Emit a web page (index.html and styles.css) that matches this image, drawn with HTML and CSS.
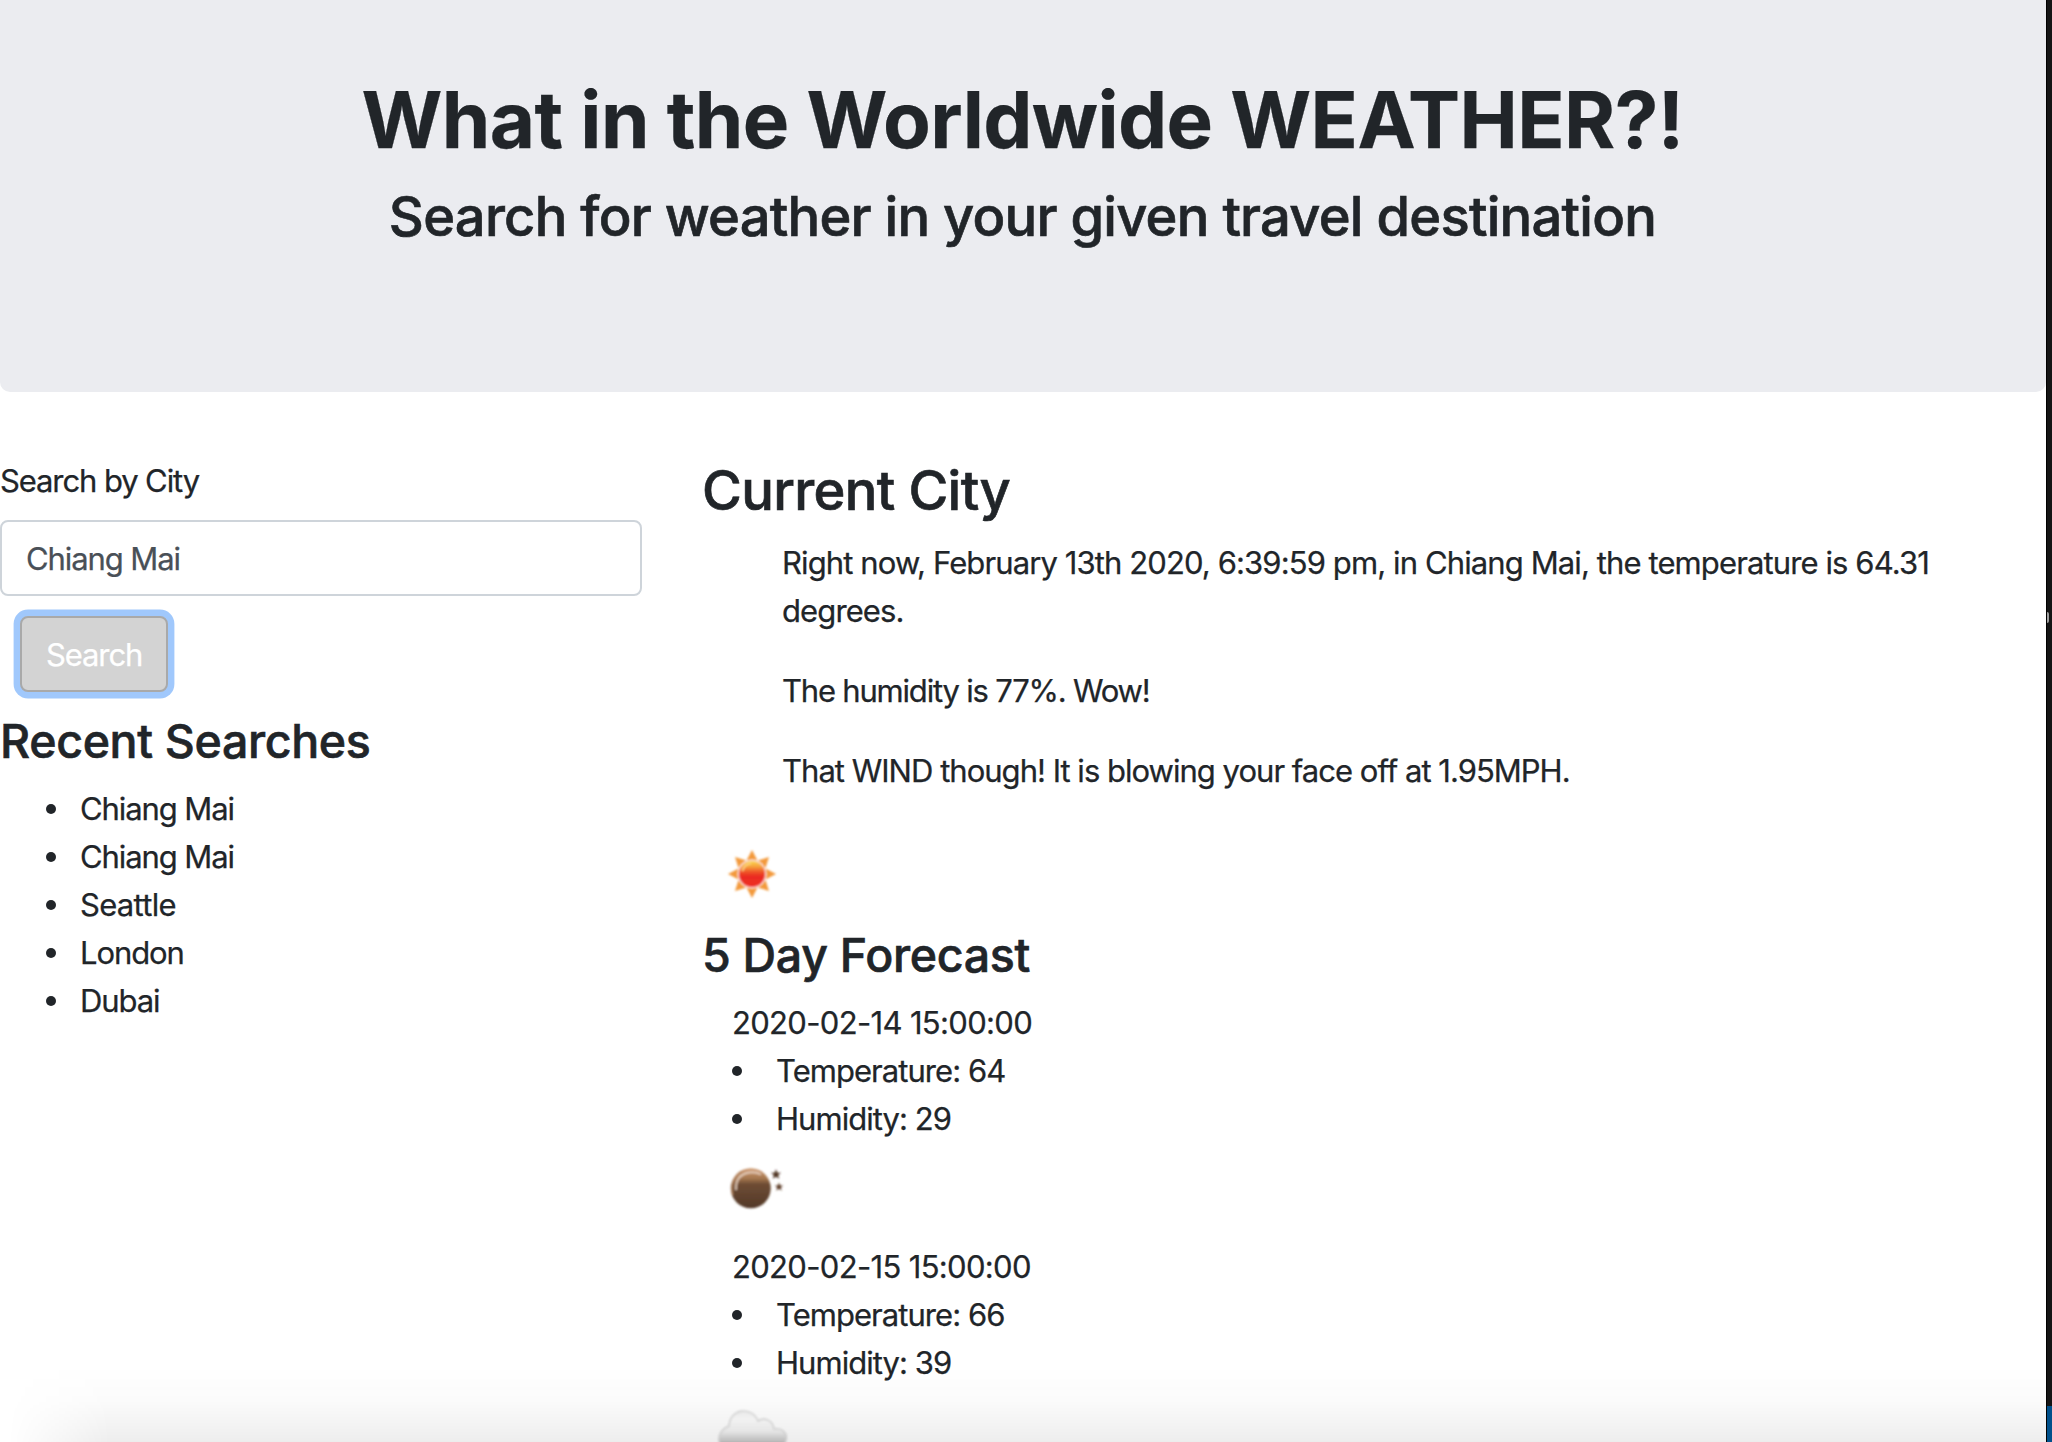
FILE: index.html
```html
<!DOCTYPE html>
<html lang="en">
<head>
<meta charset="utf-8">
<title>What in the Worldwide WEATHER?!</title>
<link rel="stylesheet" href="styles.css">
</head>
<body>
<div class="screen">
  <main class="page">
    <header class="jumbotron">
      <h1 class="title">What in the Worldwide WEATHER?!</h1>
      <h3 class="subtitle">Search for weather in your given travel destination</h3>
    </header>
    <div class="columns">
      <section class="sidebar">
        <label class="label" for="city">Search by City</label>
        <input class="input" id="city" type="text" value="Chiang Mai">
        <button class="button" type="button">Search</button>
        <h4 class="heading">Recent Searches</h4>
        <ul class="recent">
          <li class="bullet">Chiang Mai</li>
          <li class="bullet">Chiang Mai</li>
          <li class="bullet bullet-loose">Seattle</li>
          <li class="bullet">London</li>
          <li class="bullet">Dubai</li>
        </ul>
      </section>
      <section class="content">
        <h3 class="city">Current City</h3>
        <div class="current">
          <p class="now">Right now, February 13th 2020, 6:39:59 pm, in Chiang Mai, the temperature is 64.31 degrees.</p>
          <p class="humidity">The humidity is 77%. Wow!</p>
          <p class="wind">That WIND though! It is blowing your face off at 1.95MPH.</p>
        </div>
        <svg class="icon" viewBox="0 0 100 100" aria-hidden="true">
          <defs>
            <linearGradient id="sun" x1="0" y1="0" x2="0" y2="1">
              <stop offset="0" stop-color="#fbd84e"/>
              <stop offset=".22" stop-color="#f6a03c"/>
              <stop offset=".45" stop-color="#ee4a26"/>
              <stop offset=".6" stop-color="#ea2c20"/>
              <stop offset="1" stop-color="#ee3026"/>
            </linearGradient>
            <filter id="soft"><feGaussianBlur stdDeviation=".85"/></filter>
            <path id="ray" d="M50 26 55.500 36.500Q50 34.500 44.500 36.500Z"/>
          </defs>
          <g filter="url(#soft)">
            <g fill="#f3993a">
              <use href="#ray"/>
              <use href="#ray" transform="rotate(45 50 50)"/>
              <use href="#ray" transform="rotate(90 50 50)"/>
              <use href="#ray" transform="rotate(135 50 50)"/>
              <use href="#ray" transform="rotate(180 50 50)"/>
              <use href="#ray" transform="rotate(225 50 50)"/>
              <use href="#ray" transform="rotate(270 50 50)"/>
              <use href="#ray" transform="rotate(315 50 50)"/>
            </g>
            <circle cx="50" cy="50" r="13.800" fill="#f9c9c4"/>
            <circle cx="50" cy="50" r="13" fill="url(#sun)"/>
            <path d="M40.500 47Q42 40.500 49 39.500" fill="none" stroke="#fde79a" stroke-width="1.200"/>
          </g>
        </svg>
        <h4 class="heading forecast">5 Day Forecast</h4>
        <div class="day">
          <div class="date">2020-02-14 15:00:00</div>
          <ul class="facts">
            <li class="bullet">Temperature: 64</li>
            <li class="bullet">Humidity: 29</li>
          </ul>
          <svg class="icon" viewBox="0 0 100 100" aria-hidden="true">
            <defs>
              <linearGradient id="moon" x1="0" y1="0" x2="0" y2="1">
                <stop offset="0" stop-color="#d09a70"/>
                <stop offset=".25" stop-color="#a67850"/>
                <stop offset=".4" stop-color="#6e4c34"/>
                <stop offset="1" stop-color="#523828"/>
              </linearGradient>
              <path id="star" d="M0-5 1.400-1.600 5-1.500 2.200.8 3.200 4.500 0 2.400-3.200 4.500-2.200.8-5-1.500-1.400-1.600Z"/>
            </defs>
            <g filter="url(#soft)">
              <circle cx="48.800" cy="45.300" r="20" fill="url(#moon)"/>
              <path d="M34 47Q33 32 47 29.500 54 28.500 59 31.500" fill="none" stroke="#e3cbb8" stroke-width="1.800"/>
              <path d="M30.500 52Q28 36 39 29" fill="none" stroke="#b4845e" stroke-width="1.500"/>
              <use href="#star" x="74" y="31.300" fill="#4f3424"/>
              <use href="#star" transform="translate(77 43.800) scale(.85)" fill="#5e3e2a"/>
            </g>
          </svg>
        </div>
        <div class="day">
          <div class="date">2020-02-15 15:00:00</div>
          <ul class="facts">
            <li class="bullet">Temperature: 66</li>
            <li class="bullet">Humidity: 39</li>
          </ul>
          <svg class="icon" viewBox="0 0 100 100" aria-hidden="true">
            <defs>
              <linearGradient id="cloud" x1="0" y1="22" x2="0" y2="56" gradientUnits="userSpaceOnUse">
                <stop offset="0" stop-color="#eeeeee"/>
                <stop offset=".3" stop-color="#fcfcfc"/>
                <stop offset=".65" stop-color="#f4f4f4"/>
                <stop offset="1" stop-color="#c2c2c2"/>
              </linearGradient>
            </defs>
            <path filter="url(#soft)" d="M20 61C14 53 17 43 27 39 28 21 50 19 56 34 62 30 71 33 72 42 79 41 87 45 83.500 55L82 61Z" fill="url(#cloud)" stroke="#dcdcdc" stroke-width="1.600"/>
          </svg>
        </div>
      </section>
    </div>
    <div class="shade"></div>
  </main>
  <aside class="edge">
    <span class="grip"></span>
    <span class="status"></span>
  </aside>
</div>
</body>
</html>
```
FILE: styles.css
```css
* { box-sizing: border-box; }

body {
  margin: 0;
  overflow: hidden;
  font-family: Inter, "Liberation Sans", sans-serif;
  font-size: 31px;
  line-height: 48px;
  letter-spacing: -1.1px;
  color: #212529;
  background: #fff;
  -webkit-text-stroke: 0.25px currentColor;
}

h1, h3, h4, p, ul { margin: 0; padding: 0; }

.screen {
  display: flex;
  width: 2052px;
  height: 1442px;
  overflow: hidden;
}

.page {
  position: relative;
  width: 2046px;
  height: 1442px;
  overflow: hidden;
}

.jumbotron {
  height: 392px;
  margin-bottom: 65px;
  padding: 72px 1px 0 0;
  text-align: center;
  background: #ebecf0;
  border-radius: 0 0 10px 10px;
}

.title {
  margin-bottom: 15px;
  font-size: 78px;
  font-weight: 700;
  line-height: 96px;
  letter-spacing: -0.6px;
}

.subtitle,
.city {
  font-size: 54.3px;
  font-weight: 500;
  line-height: 67px;
  -webkit-text-stroke-width: 0.65px;
}

.subtitle { letter-spacing: -0.76px; }

.city {
  margin-bottom: 15px;
  letter-spacing: -0.65px;
}

.columns {
  display: flex;
  align-items: flex-start;
}

.sidebar {
  display: flex;
  flex-direction: column;
  align-items: flex-start;
  width: 702px;
}

.label {
  margin-bottom: 15px;
  letter-spacing: -1.1px;
}

.input,
.button {
  height: 76px;
  padding: 0 24px;
  border: 2px solid #ced4da;
  border-radius: 8px;
  font: inherit;
  letter-spacing: inherit;
}

.input {
  width: 642px;
  color: #495057;
  background: #fff;
}

.button {
  width: 148px;
  margin: 20px 0 21px 20px;
  padding-top: 2px;
  color: #fff;
  background: #d3d3d3;
  border-color: #a9a9a9;
  box-shadow: 0 0 0 6.4px #a0c8fc;
}

.heading {
  font-size: 46.5px;
  font-weight: 500;
  line-height: 57px;
  letter-spacing: -0.34px;
  -webkit-text-stroke-width: 0.6px;
}

.recent { padding: 15px 0 0 46px; }

.bullet {
  display: flex;
  align-items: center;
  gap: 24px;
}

.bullet::before {
  content: "";
  width: 10px;
  height: 10px;
  border-radius: 50%;
  background: #212529;
}

.bullet-loose { letter-spacing: -0.7px; }

.content { width: 1324px; }

.current {
  display: flex;
  flex-direction: column;
  gap: 32px;
  width: 1240px;
  padding-left: 80px;
}

.now { letter-spacing: -0.89px; }
.humidity { letter-spacing: -1.2px; }
.wind { letter-spacing: -0.98px; }

.icon {
  display: block;
  width: 100px;
  height: 100px;
}

.current + .icon { margin-top: 29px; }

.forecast {
  margin-top: 3px;
  margin-bottom: 15px;
  letter-spacing: -0.3px;
}

.date {
  padding-left: 30px;
  letter-spacing: -0.67px;
}

.facts {
  padding-left: 30px;
  letter-spacing: -0.95px;
}

.facts .bullet { gap: 34px; }

.shade {
  position: absolute;
  right: 0;
  bottom: 0;
  left: 0;
  height: 76px;
  background: linear-gradient(to bottom, rgba(0, 0, 0, 0), rgba(0, 0, 0, 0.014) 45%, rgba(0, 0, 0, 0.07));
  -webkit-mask-image: linear-gradient(to right, transparent 8px, #000 110px);
  mask-image: linear-gradient(to right, transparent 8px, #000 110px);
}

.edge {
  display: flex;
  flex-direction: column;
  justify-content: space-between;
  width: 6px;
  height: 1442px;
  padding-top: 612px;
  background: #151515;
  border-left: 1px solid #000;
}

.grip {
  width: 2px;
  height: 11px;
  background: #a0a0a0;
  border-radius: 0 2px 2px 0;
}

.status {
  height: 36px;
  background: #00508b;
}
```
